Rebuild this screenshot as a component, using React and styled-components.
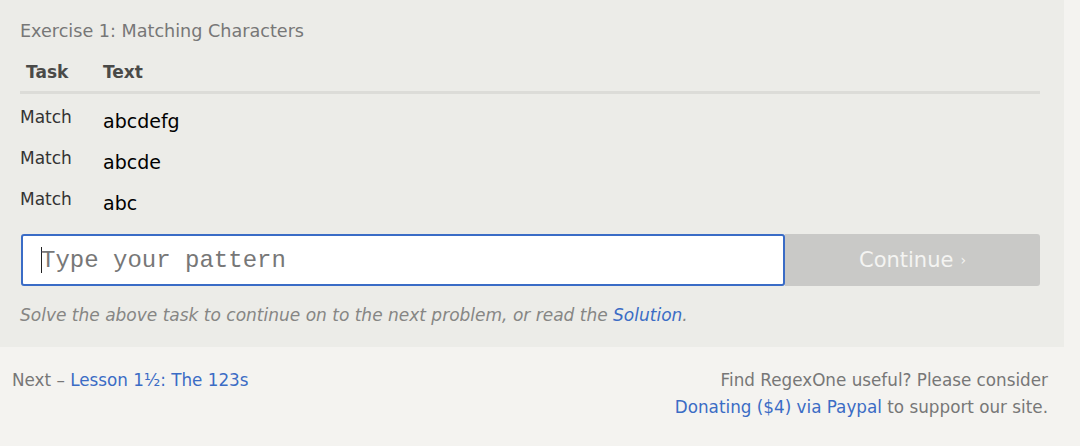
import styled, { createGlobalStyle } from "styled-components";

const Global = createGlobalStyle`
  html, body {
    margin: 0;
    padding: 0;
    background: #f4f3f0;
    font-family: "DejaVu Sans", "Open Sans", sans-serif;
  }
`;

const Page = styled.div`
  width: 1080px;
  height: 446px;
  overflow: hidden;
`;

const Panel = styled.section`
  width: 1064px;
  box-sizing: border-box;
  background: #ecece8;
  padding: 20px 24px 21px 20px;
`;

const Heading = styled.div`
  color: #777;
  font-size: 17.6px;
  line-height: 22px;
  margin-bottom: 19px;
`;

const Row = styled.div`
  display: grid;
  grid-template-columns: 83px 1fr;
  height: ${(p) => (p.$head ? "30px" : "41px")};
  border-bottom: ${(p) => (p.$head ? "3px solid #dcdcd8" : "none")};
`;

const HeadCell = styled.div`
  color: #4a4a48;
  font-size: 17px;
  font-weight: bold;
  line-height: 22px;
  padding-left: ${(p) => (p.$first ? "6px" : "0")};
`;

const TaskCell = styled.div`
  color: #333;
  font-size: 17px;
  line-height: 22px;
  padding-top: 12px;
`;

const TextCell = styled.div`
  color: #000;
  font-size: 19px;
  line-height: 22px;
  padding-top: 16px;
`;

const InputRow = styled.div`
  display: flex;
  margin-top: 17px;
  margin-left: 1px;
`;

const Input = styled.div`
  flex: 0 0 764px;
  height: 52px;
  box-sizing: border-box;
  background: #fff;
  border: 2px solid #3a6cc6;
  border-radius: 3px;
  display: flex;
  align-items: center;
  padding-left: 18px;
  font-family: "Liberation Mono", "DejaVu Sans Mono", monospace;
  font-size: 24px;
  color: #777;
`;

const Caret = styled.span`
  width: 1px;
  height: 26px;
  background: #222;
  margin-right: -1px;
`;

const Button = styled.div`
  flex: 0 0 255px;
  height: 52px;
  background: #c9c9c7;
  border-radius: 0 3px 3px 0;
  display: flex;
  align-items: center;
  justify-content: center;
  color: #f4f4f2;
  font-size: 21px;
`;

const Arrow = styled.span`
  font-size: 14px;
  margin-left: 7px;
`;

const Hint = styled.p`
  margin: 18px 0 0;
  font-style: italic;
  color: #868684;
  font-size: 17px;
  line-height: 22px;
`;

const Link = styled.a`
  color: #3b6cc5;
  text-decoration: none;
`;

const Footer = styled.footer`
  display: flex;
  justify-content: space-between;
  padding: 20px 32px 0 12px;
  font-size: 16.8px;
  line-height: 27px;
  color: #777;
`;

const Right = styled.div`
  text-align: right;
`;

const rows = ["abcdefg", "abcde", "abc"];

export default function App() {
  return (
    <Page>
      <Global />
      <Panel>
        <Heading>Exercise 1: Matching Characters</Heading>
        <Row $head>
          <HeadCell $first>Task</HeadCell>
          <HeadCell>Text</HeadCell>
        </Row>
        {rows.map((t) => (
          <Row key={t}>
            <TaskCell>Match</TaskCell>
            <TextCell>{t}</TextCell>
          </Row>
        ))}
        <InputRow>
          <Input>
            <Caret />
            Type your pattern
          </Input>
          <Button>
            Continue<Arrow>›</Arrow>
          </Button>
        </InputRow>
        <Hint>
          Solve the above task to continue on to the next problem, or read the{" "}
          <Link>Solution</Link>.
        </Hint>
      </Panel>
      <Footer>
        <div>
          Next – <Link>Lesson 1½: The 123s</Link>
        </div>
        <Right>
          Find RegexOne useful? Please consider
          <br />
          <Link>Donating ($4) via Paypal</Link> to support our site.
        </Right>
      </Footer>
    </Page>
  );
}
